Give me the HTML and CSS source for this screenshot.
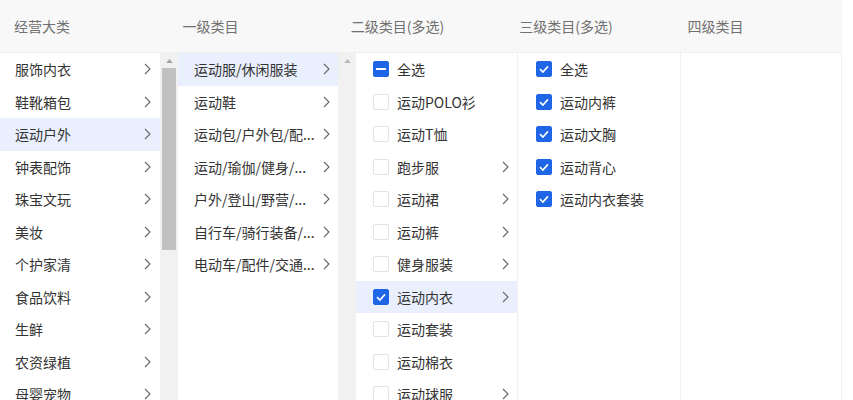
FILE: index.html
```html
<!DOCTYPE html>
<html lang="zh">
<head>
<meta charset="utf-8">
<link rel="stylesheet" href="styles.css">
</head>
<body>
<div class="panel">
  <div class="head">
    <div class="hcell">经营大类</div>
    <div class="hcell">一级类目</div>
    <div class="hcell">二级类目(多选)</div>
    <div class="hcell">三级类目(多选)</div>
    <div class="hcell">四级类目</div>
  </div>
  <div class="body">
    <div class="col c1">
      <div class="row"><span class="lbl">服饰内衣</span><svg class="chev" viewBox="0 0 7 12"><path d="M1 1L6 6L1 11"/></svg></div>
      <div class="row"><span class="lbl">鞋靴箱包</span><svg class="chev" viewBox="0 0 7 12"><path d="M1 1L6 6L1 11"/></svg></div>
      <div class="row sel"><span class="lbl">运动户外</span><svg class="chev" viewBox="0 0 7 12"><path d="M1 1L6 6L1 11"/></svg></div>
      <div class="row"><span class="lbl">钟表配饰</span><svg class="chev" viewBox="0 0 7 12"><path d="M1 1L6 6L1 11"/></svg></div>
      <div class="row"><span class="lbl">珠宝文玩</span><svg class="chev" viewBox="0 0 7 12"><path d="M1 1L6 6L1 11"/></svg></div>
      <div class="row"><span class="lbl">美妆</span><svg class="chev" viewBox="0 0 7 12"><path d="M1 1L6 6L1 11"/></svg></div>
      <div class="row"><span class="lbl">个护家清</span><svg class="chev" viewBox="0 0 7 12"><path d="M1 1L6 6L1 11"/></svg></div>
      <div class="row"><span class="lbl">食品饮料</span><svg class="chev" viewBox="0 0 7 12"><path d="M1 1L6 6L1 11"/></svg></div>
      <div class="row"><span class="lbl">生鲜</span><svg class="chev" viewBox="0 0 7 12"><path d="M1 1L6 6L1 11"/></svg></div>
      <div class="row"><span class="lbl">农资绿植</span><svg class="chev" viewBox="0 0 7 12"><path d="M1 1L6 6L1 11"/></svg></div>
      <div class="row"><span class="lbl">母婴宠物</span><svg class="chev" viewBox="0 0 7 12"><path d="M1 1L6 6L1 11"/></svg></div>
    </div>
    <div class="sbar">
      <svg class="arrow" viewBox="0 0 8 5"><path d="M0 5L4 0L8 5Z"/></svg>
      <div class="thumb"></div>
    </div>
    <div class="col c2">
      <div class="row sel"><span class="lbl">运动服/休闲服装</span><svg class="chev" viewBox="0 0 7 12"><path d="M1 1L6 6L1 11"/></svg></div>
      <div class="row"><span class="lbl">运动鞋</span><svg class="chev" viewBox="0 0 7 12"><path d="M1 1L6 6L1 11"/></svg></div>
      <div class="row"><span class="lbl">运动包/户外包/配...</span><svg class="chev" viewBox="0 0 7 12"><path d="M1 1L6 6L1 11"/></svg></div>
      <div class="row"><span class="lbl">运动/瑜伽/健身/...</span><svg class="chev" viewBox="0 0 7 12"><path d="M1 1L6 6L1 11"/></svg></div>
      <div class="row"><span class="lbl">户外/登山/野营/...</span><svg class="chev" viewBox="0 0 7 12"><path d="M1 1L6 6L1 11"/></svg></div>
      <div class="row"><span class="lbl">自行车/骑行装备/...</span><svg class="chev" viewBox="0 0 7 12"><path d="M1 1L6 6L1 11"/></svg></div>
      <div class="row"><span class="lbl">电动车/配件/交通...</span><svg class="chev" viewBox="0 0 7 12"><path d="M1 1L6 6L1 11"/></svg></div>
    </div>
    <div class="sbar light">
      <svg class="arrow" viewBox="0 0 8 5"><path d="M0 5L4 0L8 5Z"/></svg>
    </div>
    <div class="col c3">
      <div class="row"><span class="cb part"><i></i></span><span class="lbl">全选</span></div>
      <div class="row"><span class="cb"></span><span class="lbl">运动POLO衫</span></div>
      <div class="row"><span class="cb"></span><span class="lbl">运动T恤</span></div>
      <div class="row"><span class="cb"></span><span class="lbl">跑步服</span><svg class="chev" viewBox="0 0 7 12"><path d="M1 1L6 6L1 11"/></svg></div>
      <div class="row"><span class="cb"></span><span class="lbl">运动裙</span><svg class="chev" viewBox="0 0 7 12"><path d="M1 1L6 6L1 11"/></svg></div>
      <div class="row"><span class="cb"></span><span class="lbl">运动裤</span><svg class="chev" viewBox="0 0 7 12"><path d="M1 1L6 6L1 11"/></svg></div>
      <div class="row"><span class="cb"></span><span class="lbl">健身服装</span><svg class="chev" viewBox="0 0 7 12"><path d="M1 1L6 6L1 11"/></svg></div>
      <div class="row sel"><span class="cb on"><svg viewBox="0 0 16 16"><path d="M4 8.2L6.9 11L12 5.4"/></svg></span><span class="lbl">运动内衣</span><svg class="chev" viewBox="0 0 7 12"><path d="M1 1L6 6L1 11"/></svg></div>
      <div class="row"><span class="cb"></span><span class="lbl">运动套装</span></div>
      <div class="row"><span class="cb"></span><span class="lbl">运动棉衣</span></div>
      <div class="row"><span class="cb"></span><span class="lbl">运动球服</span><svg class="chev" viewBox="0 0 7 12"><path d="M1 1L6 6L1 11"/></svg></div>
    </div>
    <div class="col c4">
      <div class="row"><span class="cb on"><svg viewBox="0 0 16 16"><path d="M4 8.2L6.9 11L12 5.4"/></svg></span><span class="lbl">全选</span></div>
      <div class="row"><span class="cb on"><svg viewBox="0 0 16 16"><path d="M4 8.2L6.9 11L12 5.4"/></svg></span><span class="lbl">运动内裤</span></div>
      <div class="row"><span class="cb on"><svg viewBox="0 0 16 16"><path d="M4 8.2L6.9 11L12 5.4"/></svg></span><span class="lbl">运动文胸</span></div>
      <div class="row"><span class="cb on"><svg viewBox="0 0 16 16"><path d="M4 8.2L6.9 11L12 5.4"/></svg></span><span class="lbl">运动背心</span></div>
      <div class="row"><span class="cb on"><svg viewBox="0 0 16 16"><path d="M4 8.2L6.9 11L12 5.4"/></svg></span><span class="lbl">运动内衣套装</span></div>
    </div>
    <div class="col c5"></div>
  </div>
</div>
</body>
</html>
```

FILE: styles.css
```css
html, body {
  margin: 0;
  padding: 0;
  background: #ffffff;
}
body {
  font-family: "Noto Sans CJK SC", "Noto Sans", sans-serif;
  font-size: 14px;
  color: #333333;
  overflow: hidden;
}
.panel {
  width: 842px;
  height: 400px;
  overflow: hidden;
}
.head {
  display: flex;
  height: 52px;
  background: #f8f8f8;
  border-bottom: 1px solid #f0f0f0;
}
.hcell {
  width: 168.4px;
  box-sizing: border-box;
  padding-left: 14px;
  line-height: 52px;
  color: #707070;
}
.body {
  display: flex;
  height: 347px;
  overflow: hidden;
}
.col {
  flex: none;
  box-sizing: border-box;
  background: #ffffff;
}
.c1 { width: 160px; }
.c2 { width: 160px; }
.c3 { width: 161px; }
.c4 { width: 163px; border-left: 1px solid #f0f0f0; }
.c5 { width: 162px; border-left: 1px solid #f0f0f0; border-right: 1px solid #f0f0f0; }
.row {
  display: flex;
  align-items: center;
  height: 32.5px;
  box-sizing: border-box;
  white-space: nowrap;
}
.row.sel { background: #e9effd; }
.c1 .row { padding: 0 9px 0 15px; }
.c2 .row { padding: 0 8px 0 16px; }
.c3 .row { padding: 0 8px 0 17px; }
.c4 .row { padding: 0 8px 0 18px; }
.lbl {
  flex: 1;
  min-width: 0;
  overflow: hidden;
}
.chev {
  flex: none;
  width: 7px;
  height: 12px;
  margin-left: 2px;
}
.chev path {
  fill: none;
  stroke: #666666;
  stroke-width: 1.1;
}
.cb {
  flex: none;
  width: 16px;
  height: 16px;
  box-sizing: border-box;
  border: 1px solid #e3e3e3;
  border-radius: 2px;
  margin-right: 8px;
  background: #ffffff;
  display: flex;
  align-items: center;
  justify-content: center;
}
.cb.on, .cb.part {
  background: #1f66e6;
  border-color: #1f66e6;
}
.cb svg {
  width: 16px;
  height: 16px;
  flex: none;
}
.cb svg path {
  fill: none;
  stroke: #ffffff;
  stroke-width: 1.6;
}
.cb.part i {
  display: block;
  width: 10px;
  height: 2px;
  background: #ffffff;
}
.sbar {
  flex: none;
  width: 18px;
  background: #f1f1f1;
  display: flex;
  flex-direction: column;
  align-items: center;
}
.arrow {
  width: 7px;
  height: 4px;
  margin-top: 6px;
  fill: #a3a3a3;
}
.sbar.light .arrow { fill: #b8b8b8; }
.thumb {
  width: 14px;
  height: 182px;
  margin-top: 5px;
  background: #c1c1c1;
}
```
